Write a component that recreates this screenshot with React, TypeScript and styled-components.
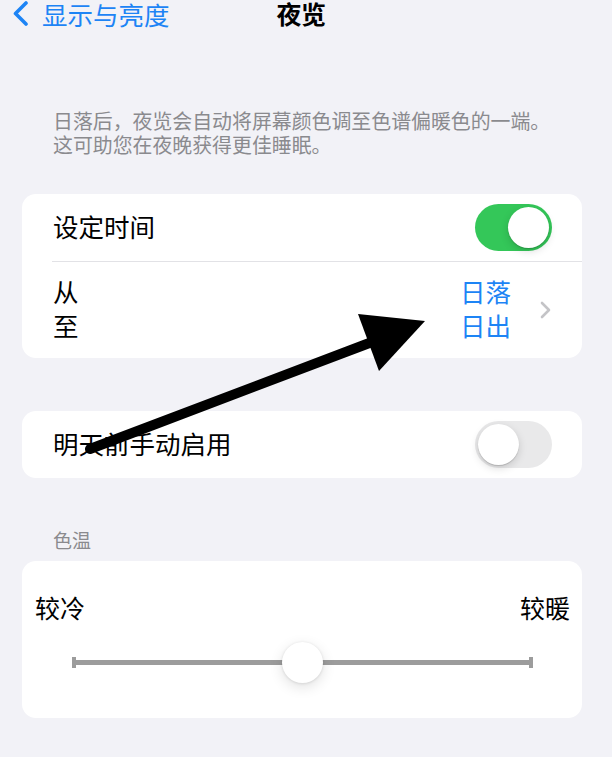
import React from "react";
import styled, { createGlobalStyle } from "styled-components";

const GlobalStyle = createGlobalStyle`
  html, body {
    margin: 0;
    padding: 0;
    background: #f2f2f7;
  }
  body {
    font-family: "Noto Sans CJK SC", "Noto Sans", sans-serif;
    color: #000;
    -webkit-font-smoothing: antialiased;
  }
`;

const Page = styled.div`
  position: relative;
  width: 612px;
  min-height: 757px;
  overflow: hidden;
  background: #f2f2f7;
`;

const NavBar = styled.header`
  display: grid;
  grid-template-columns: 1fr auto 1fr;
  align-items: center;
  height: 27px;
  padding-right: 10px;
`;

const BackButton = styled.div`
  display: flex;
  align-items: center;
  gap: 13px;
  padding-left: 12px;
  color: #1d84f5;
  font-size: 25.5px;
  line-height: 27px;
`;

const Title = styled.div`
  font-size: 25px;
  font-weight: 700;
  line-height: 27px;
  letter-spacing: -0.5px;
`;

const Footnote = styled.p`
  margin: 82px 0 0;
  padding: 0 30px 0 53px;
  font-size: 19.9px;
  line-height: 24px;
  color: #8a8a8e;
`;

const SectionHeader = styled.div`
  margin-top: 50px;
  padding-left: 53px;
  font-size: 19px;
  line-height: 24px;
  color: #8a8a8e;
`;

const Card = styled.section<{ $top: number }>`
  margin: ${(p) => p.$top}px 30px 0 22px;
  background: #fff;
  border-radius: 14px;
  overflow: hidden;
`;

const Row = styled.div<{ $height: number }>`
  display: flex;
  align-items: center;
  justify-content: space-between;
  height: ${(p) => p.$height}px;
  padding: 0 30px 0 31px;
  font-size: 25.5px;
`;

const RowLabel = styled.span`
  line-height: 32px;
  padding-bottom: 4px;
`;

const Divider = styled.div`
  height: 1px;
  margin-left: 30px;
  background: #e2e2e6;
`;

const Stack = styled.div`
  display: flex;
  flex-direction: column;
  line-height: 34px;
  padding-bottom: 4px;
`;

const ValueGroup = styled.div`
  display: flex;
  align-items: center;
  gap: 28px;
`;

const Value = styled(Stack)`
  color: #1d84f5;
`;

const SwitchTrack = styled.div<{ $on: boolean }>`
  position: relative;
  width: 77px;
  height: 47px;
  border-radius: 24px;
  background: ${(p) => (p.$on ? "#34c759" : "#e9e9ea")};
  flex-shrink: 0;
`;

const SwitchKnob = styled.div<{ $on: boolean }>`
  position: absolute;
  top: 3px;
  left: ${(p) => (p.$on ? "33px" : "3px")};
  width: 41px;
  height: 41px;
  border-radius: 50%;
  background: #fff;
  box-shadow: 0 3px 8px rgba(0, 0, 0, 0.15), 0 1px 1px rgba(0, 0, 0, 0.16);
`;

const SliderCard = styled(Card)`
  height: 157px;
  padding: 31px 12px 0 13px;
  box-sizing: border-box;
`;

const Labels = styled.div`
  display: flex;
  justify-content: space-between;
  font-size: 25px;
  line-height: 30px;
`;

const SliderBox = styled.div`
  position: relative;
  height: 41px;
  margin: 20px 37px 0 37px;
  display: flex;
  align-items: center;
`;

const SliderTrack = styled.div`
  flex: 1;
  height: 5px;
  background: #9c9c9c;
`;

const SliderCap = styled.div`
  width: 4px;
  height: 11px;
  background: #9c9c9c;
`;

const SliderThumb = styled.div`
  position: absolute;
  top: 0;
  width: 41px;
  height: 41px;
  margin-left: -20.5px;
  border-radius: 50%;
  background: #fff;
  box-shadow: 0 4px 14px rgba(0, 0, 0, 0.12), 0 0.5px 3px rgba(0, 0, 0, 0.12);
`;

const Overlay = styled.svg`
  position: absolute;
  left: 0;
  top: 0;
  pointer-events: none;
`;

const Switch = ({ on }: { on: boolean }) => (
  <SwitchTrack $on={on}>
    <SwitchKnob $on={on} />
  </SwitchTrack>
);

const Slider = ({ value }: { value: number }) => (
  <SliderBox>
    <SliderCap />
    <SliderTrack />
    <SliderCap />
    <SliderThumb style={{ left: `${value * 100}%` }} />
  </SliderBox>
);

export default function App() {
  return (
    <Page>
      <GlobalStyle />
      <NavBar>
        <BackButton>
          <svg width="17" height="25" viewBox="0 0 17 25">
            <path
              d="M14 2 L3.5 12.5 L14 23"
              fill="none"
              stroke="#1d84f5"
              strokeWidth="3.6"
              strokeLinecap="round"
              strokeLinejoin="round"
            />
          </svg>
          <span>显示与亮度</span>
        </BackButton>
        <Title>夜览</Title>
        <div />
      </NavBar>

      <Footnote>
        日落后，夜览会自动将屏幕颜色调至色谱偏暖色的一端。
        <br />
        这可助您在夜晚获得更佳睡眠。
      </Footnote>

      <Card $top={37}>
        <Row $height={67}>
          <RowLabel>设定时间</RowLabel>
          <Switch on />
        </Row>
        <Divider />
        <Row $height={96}>
          <Stack>
            <span>从</span>
            <span>至</span>
          </Stack>
          <ValueGroup>
            <Value>
              <span>日落</span>
              <span>日出</span>
            </Value>
            <svg width="13" height="20" viewBox="0 0 13 20">
              <path
                d="M3 3 L10 10 L3 17"
                fill="none"
                stroke="#c4c4c7"
                strokeWidth="2.6"
                strokeLinecap="round"
                strokeLinejoin="round"
              />
            </svg>
          </ValueGroup>
        </Row>
      </Card>

      <Card $top={53}>
        <Row $height={67}>
          <RowLabel>明天前手动启用</RowLabel>
          <Switch on={false} />
        </Row>
      </Card>

      <SectionHeader>色温</SectionHeader>
      <SliderCard $top={9}>
        <Labels>
          <span>较冷</span>
          <span>较暖</span>
        </Labels>
        <Slider value={0.5} />
      </SliderCard>

      {/* annotation arrow drawn over the settings */}
      <Overlay width="612" height="757" viewBox="0 0 612 757">
        <line x1="90" y1="449" x2="372" y2="342" stroke="#000" strokeWidth="10" strokeLinecap="round" />
        <polygon points="358,314 425,321 379,371" fill="#000" />
      </Overlay>
    </Page>
  );
}
